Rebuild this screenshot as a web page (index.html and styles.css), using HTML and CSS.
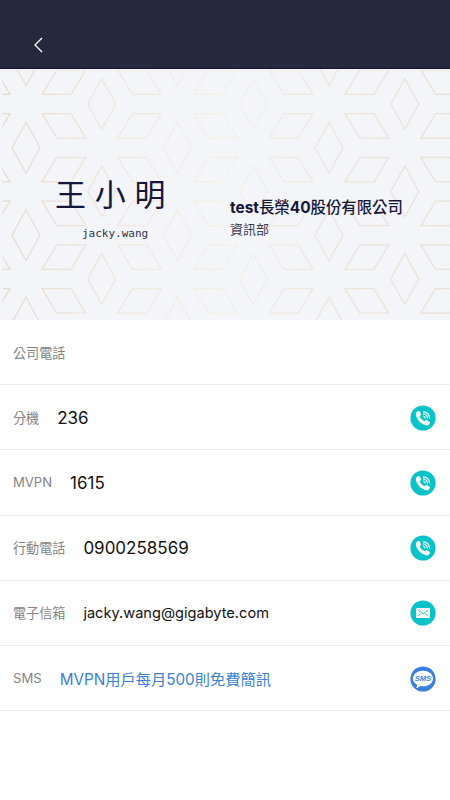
FILE: index.html
```html
<!DOCTYPE html>
<html lang="zh-Hant">
<head>
<meta charset="utf-8">
<title>王小明</title>
<link rel="stylesheet" href="styles.css">
</head>
<body>
<svg class="defs" aria-hidden="true">
  <symbol id="call" viewBox="0 0 26 26">
    <circle cx="13" cy="13" r="12.6" fill="#08c4ca"/>
    <path d="M6.600 7.100 8.200 6q1.100-.4 1.600.6l1.100 2.300q.3.900-.4 1.500l-1 .8q1.400 3.300 4.700 5l1.200-.9q.8-.5 1.600 0l2.500 1.500q.8.600.3 1.500l-.9 1.300q-1.100 1.200-3 .7Q8.300 18 5.900 10.500 5.500 8.200 6.600 7.100z" fill="#fff"/>
    <path d="M13 6.800q6.300.2 6.700 6.600M13 8.900q4.200.3 4.500 4.500M13 11q2.100.3 2.300 2.400" fill="none" stroke="#fff" stroke-width="1.200"/>
  </symbol>
</svg>
<header class="bar">
  <svg class="back" viewBox="0 0 10 16"><path d="M9 1 2 8l7 7"/></svg>
</header>
<section class="card">
  <svg class="lattice" viewBox="0 0 450 251">
    <defs>
      <g id="star">
        <path d="M16-9.700H45L59.750-34.050h-29zM16 9.700H45L59.750 34.050h-29zM0 18.250 14 43.750 0 69.250-14 43.750z"/>
      </g>
      <g id="column">
        <use href="#star" y="-52.500"/><use href="#star" y="35"/><use href="#star" y="122.500"/><use href="#star" y="210"/>
      </g>
      <linearGradient id="ink" gradientUnits="userSpaceOnUse" x1="0" y1="0" x2="450" y2="0">
        <stop offset="0" stop-color="#e6dad0"/><stop offset=".25" stop-color="#f0e7dc"/><stop offset=".5" stop-color="#f3f0e8"/><stop offset=".75" stop-color="#ece5da"/><stop offset="1" stop-color="#eae0d6"/>
      </linearGradient>
      <mask id="lines">
        <g fill="none" stroke="#fff" stroke-width="1.300">
          <use href="#column" x="-125.500"/><use href="#column" x="26"/><use href="#column" x="177.500"/><use href="#column" x="329"/>
          <g transform="translate(0 -43.750)"><use href="#column" x="-49.750"/><use href="#column" x="101.750"/><use href="#column" x="253.250"/><use href="#column" x="404.750"/><use href="#star" x="-49.750" y="297.500"/><use href="#star" x="101.750" y="297.500"/><use href="#star" x="253.250" y="297.500"/><use href="#star" x="404.750" y="297.500"/></g>
        </g>
      </mask>
    </defs>
    <rect x="2.500" y="1" width="447.500" height="250" fill="url(#ink)" mask="url(#lines)"/>
  </svg>
  <div class="person">
    <h1 class="name">王小明</h1>
    <p class="alias">jacky.wang</p>
  </div>
  <div class="firm">
    <h2 class="company"><b>test</b>長榮<b>40</b>股份有限公司</h2>
    <p class="dept">資訊部</p>
  </div>
</section>
<main class="rows">
  <div class="row"><span class="label">公司電話</span></div>
  <div class="row"><span class="label">分機</span><span class="value">236</span><svg class="icon"><use href="#call"/></svg></div>
  <div class="row"><span class="label">MVPN</span><span class="value">1615</span><svg class="icon"><use href="#call"/></svg></div>
  <div class="row"><span class="label">行動電話</span><span class="value">0900258569</span><svg class="icon"><use href="#call"/></svg></div>
  <div class="row"><span class="label">電子信箱</span><span class="value mail">jacky.wang@gigabyte.com</span>
    <svg class="icon" viewBox="0 0 26 26"><circle cx="13" cy="13" r="12.600" fill="#08c4ca"/><rect x="6" y="8" width="14" height="10" rx=".8" fill="#fff"/><path d="m8 10 5 4 5-4M8 16l2.500-2.300M18 16l-2.500-2.300" fill="none" stroke="#08c4ca" stroke-width=".9"/></svg></div>
  <div class="row"><span class="label">SMS</span><span class="value link">MVPN用戶每月500則免費簡訊</span>
    <svg class="icon" viewBox="0 0 26 26"><circle cx="13" cy="13" r="12.600" fill="#3a7fdc"/><path d="M13 4.700c5.600 0 10 3.300 10 7.800s-4.400 7.800-10 7.800q-1.500 0-2.800-.3Q8.500 21.900 6 22q1.400-1.300 1-3.200C4.600 17.400 3 15.200 3 12.500c0-4.500 4.400-7.800 10-7.800z" fill="#fff"/><text class="sms" x="12.900" y="15.200" text-anchor="middle" textLength="16.500" lengthAdjust="spacingAndGlyphs">SMS</text></svg></div>
</main>
</body>
</html>
```

FILE: styles.css
```css
* { box-sizing: border-box; }
body {
  margin: 0;
  width: 450px;
  height: 800px;
  overflow: hidden;
  background: #fff;
  font-family: Inter, "Noto Sans CJK TC", sans-serif;
}
h1, h2, p { margin: 0; }
.defs { position: absolute; width: 0; height: 0; }
.bar {
  height: 69px;
  padding: 37px 0 0 33px;
  background: #252a41;
  border-bottom: 1px solid #11122e;
}
.back { display: block; width: 10px; height: 16px; fill: none; stroke: #fff; stroke-width: 1.3; }
.card {
  position: relative;
  display: grid;
  grid-template-columns: 230px 1fr;
  height: 251px;
  background: #f4f5f9;
  color: #15173a;
}
.lattice { position: absolute; inset: 0; width: 450px; height: 251px; }
.person { position: relative; padding: 104px 0 0 55px; }
.name {
  font-weight: 400;
  font-size: 31px;
  line-height: 44px;
  letter-spacing: 8.7px;
  white-space: nowrap;
}
.alias {
  margin-top: 7px;
  padding-left: 27px;
  font: 11px/20px "DejaVu Sans Mono", monospace;
  color: #303346;
}
.firm { position: relative; padding-top: 127px; }
.company { font-size: 15.4px; line-height: 23px; font-weight: 500; white-space: nowrap; }
.company b { font-weight: 700; }
.dept { font-size: 13px; line-height: 20px; color: #3c3e50; }
.row {
  display: flex;
  align-items: center;
  height: 65.2px;
  padding: 0 14px 0 13px;
  border-bottom: 1px solid #ededed;
}
.label { font-size: 13.1px; color: #848484; font-weight: 400; white-space: nowrap; }
.value { margin-left: 18px; padding-top: 1px; font-size: 17px; color: #111; white-space: nowrap; }
.mail { font-size: 14.6px; }
.link { padding: 0 0 1px; font-size: 15.25px; color: #3b7fd6; }
.icon { flex: none; width: 26px; height: 26px; margin: 1px 0 0 auto; }
.sms { font: italic 700 7px "Liberation Sans", sans-serif; fill: #3a7fdc; }
```
